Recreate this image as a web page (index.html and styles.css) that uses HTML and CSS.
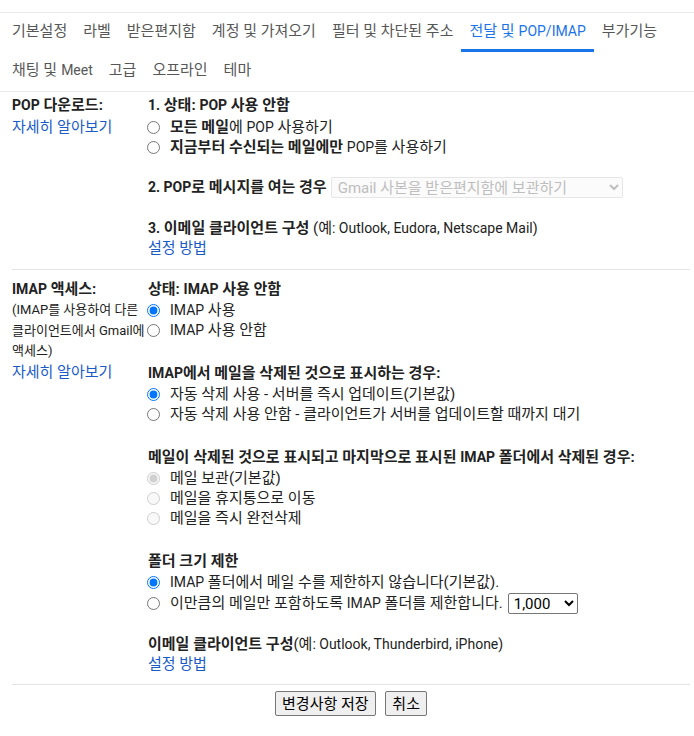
FILE: index.html
```html
<html>

<head>
    <meta charset="UTF-8" />
    <link rel="stylesheet" href="styles.css">
</head>

<body>
    <div class="tabs">
        <div class="tab">기본설정</div>
        <div class="tab">라벨</div>
        <div class="tab">받은편지함</div>
        <div class="tab">계정 및 가져오기</div>
        <div class="tab">필터 및 차단된 주소</div>
        <div class="tab active">전달 및 <span class="en">POP/IMAP</span></div>
        <div class="tab">부가기능</div>
        <div class="tab">채팅 및 <span class="en">Meet</span></div>
        <div class="tab">고급</div>
        <div class="tab">오프라인</div>
        <div class="tab">테마</div>
    </div>

    <div class="section pop">
        <div class="side">
            <div class="label"><span class="en">POP</span> 다운로드:</div>
            <a class="link more" href="#">자세히 알아보기</a>
        </div>
        <div class="main">
            <div class="title"><span class="en">1.</span> 상태: <span class="en">POP</span> 사용 안함</div>
            <label class="opt"><input type="radio" name="pop"><span><b>모든 메일</b>에 <span class="en">POP</span> 사용하기</span></label>
            <label class="opt"><input type="radio" name="pop"><span><b>지금부터 수신되는 메일에만</b> <span class="en">POP</span>를 사용하기</span></label>

            <div class="selrow">
                <b><span class="en">2. POP</span>로 메시지를 여는 경우</b>
                <select class="popsel" disabled>
                    <option>Gmail 사본을 받은편지함에 보관하기</option>
                </select>
            </div>

            <div class="group3">
                <div class="line"><b><span class="en">3.</span> 이메일 클라이언트 구성</b> (예<span class="en">: Outlook, Eudora, Netscape Mail)</span></div>
                <a class="link" href="#">설정 방법</a>
            </div>
        </div>
    </div>

    <div class="section imap">
        <div class="side">
            <div class="label"><span class="en">IMAP</span> 액세스:</div>
            <div class="desc">(IMAP를 사용하여 다른 클라이언트에서 Gmail에 액세스)</div>
            <a class="link" href="#">자세히 알아보기</a>
        </div>
        <div class="main">
            <div class="title">상태: <span class="en">IMAP</span> 사용 안함</div>
            <label class="opt"><input type="radio" name="imap" checked><span><span class="en">IMAP</span> 사용</span></label>
            <label class="opt"><input type="radio" name="imap"><span><span class="en">IMAP</span> 사용 안함</span></label>

            <div class="group">
                <div class="title"><span class="en">IMAP</span>에서 메일을 삭제된 것으로 표시하는 경우:</div>
                <label class="opt"><input type="radio" name="expunge" checked><span>자동 삭제 사용 - 서버를 즉시 업데이트(기본값)</span></label>
                <label class="opt"><input type="radio" name="expunge"><span>자동 삭제 사용 안함 - 클라이언트가 서버를 업데이트할 때까지 대기</span></label>
            </div>

            <div class="group">
                <div class="title">메일이 삭제된 것으로 표시되고 마지막으로 표시된 <span class="en">IMAP</span> 폴더에서 삭제된 경우:</div>
                <label class="opt"><input type="radio" name="del" checked disabled><span>메일 보관(기본값)</span></label>
                <label class="opt"><input type="radio" name="del" disabled><span>메일을 휴지통으로 이동</span></label>
                <label class="opt"><input type="radio" name="del" disabled><span>메일을 즉시 완전삭제</span></label>
            </div>

            <div class="group">
                <div class="title">폴더 크기 제한</div>
                <label class="opt"><input type="radio" name="limit" checked><span><span class="en">IMAP</span> 폴더에서 메일 수를 제한하지 않습니다(기본값).</span></label>
                <label class="opt tall"><input type="radio" name="limit"><span>이만큼의 메일만 포함하도록 <span class="en">IMAP</span> 폴더를 제한합니다.</span>
                    <select class="numsel">
                        <option>1,000</option>
                        <option>2,000</option>
                        <option>5,000</option>
                        <option>10,000</option>
                    </select>
                </label>
            </div>

            <div class="group last">
                <div class="line"><b>이메일 클라이언트 구성</b>(예<span class="en">: Outlook, Thunderbird, iPhone)</span></div>
                <a class="link" href="#">설정 방법</a>
            </div>
        </div>
    </div>

    <div class="actions">
        <button>변경사항 저장</button>
        <button>취소</button>
    </div>
</body>

</html>
```

FILE: styles.css
```css
body {
    margin: 0;
    font-family: Roboto, "Noto Sans CJK KR", sans-serif;
    font-size: 15px;
    line-height: 20px;
    color: #222;
    background: #fff;
}

.en {
    font-size: 14px;
}

b {
    font-weight: bold;
}

.tabs {
    display: flex;
    flex-wrap: wrap;
    margin-top: 12px;
    padding-left: 4px;
    border-top: 1px solid #ebebeb;
    border-bottom: 1px solid #ebebeb;
}

.tab {
    box-sizing: border-box;
    height: 39px;
    padding: 0 8px;
    display: flex;
    align-items: center;
    gap: 4px;
    white-space: nowrap;
    color: #575757;
    border-bottom: 3px solid transparent;
}

.tab.active {
    color: #1a73e8;
    border-bottom-color: #1a73e8;
}

.section {
    display: grid;
    grid-template-columns: 136px 1fr;
    margin: 0 4px 0 12px;
    border-bottom: 1px solid #e3e3e3;
}

.pop {
    padding: 3px 0 11px;
}

.imap {
    padding: 9px 0 10px;
}

.label {
    font-weight: bold;
}

.link {
    display: block;
    color: #1a5bc8;
    text-decoration: none;
}

.more {
    margin-top: 2px;
}

.desc {
    margin-top: 1px;
    font-size: 13px;
    line-height: 20.5px;
    word-break: keep-all;
}

.title {
    font-weight: bold;
    margin-bottom: 1px;
}

.pop .title {
    margin-bottom: 2px;
}

.opt {
    display: flex;
    align-items: center;
    height: 20px;
    white-space: nowrap;
}

.opt.tall {
    height: 22px;
}

.opt input {
    margin: 0 10px 0 -1px;
    width: 13px;
    height: 13px;
}

.selrow {
    display: flex;
    align-items: center;
    gap: 4px;
    height: 24px;
    margin-top: 18px;
}

.popsel {
    box-sizing: border-box;
    width: 292px;
    height: 21px;
    padding: 0 0 0 2px;
    font: inherit;
    font-size: 15px;
    color: #a3a3a3;
    background: #fafafa;
    border: 1px solid #dcdcdc;
    border-radius: 2px;
}

.group3 {
    margin-top: 19px;
}

.group {
    margin-top: 23px;
}

.group.last {
    margin-top: 20px;
}

.numsel {
    box-sizing: border-box;
    width: 70px;
    height: 21px;
    margin-left: 5px;
    padding: 0 0 0 1px;
    font: inherit;
    font-size: 15px;
    color: #000;
    background: #fff;
    border: 1px solid #767676;
    border-radius: 2px;
}

.actions {
    margin: 0 4px 0 12px;
    padding-top: 6px;
    text-align: center;
}

.actions button {
    box-sizing: border-box;
    height: 25px;
    margin: 0 3px;
    padding: 0 6px;
    font: inherit;
    font-size: 15px;
    line-height: 20px;
    color: #000;
    background: #efefef;
    border: 1px solid #767676;
    border-radius: 2px;
}
```
